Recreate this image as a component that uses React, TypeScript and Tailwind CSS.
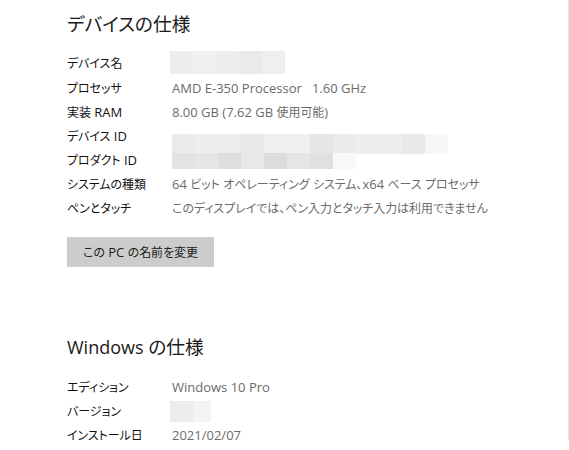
import React from "react";

const font = {
  fontFamily: '"Open Sans", "Noto Sans CJK JP", sans-serif',
};

function T({ s, big }: { s: string; big?: boolean }) {
  const parts = s.split(/([\u3000-\u30ff\u4e00-\u9fff\uff00-\uffef]+)/);
  return (
    <span>
      {parts.map((p, i) =>
        i % 2 === 1 ? (
          <span key={i} className={big ? "text-[1.04em]" : "text-[0.92em]"}>
            {p}
          </span>
        ) : (
          <React.Fragment key={i}>{p}</React.Fragment>
        )
      )}
    </span>
  );
}

function Mosaic({ colors, w, h }: { colors: string[]; w: number; h: number }) {
  return (
    <div className="flex">
      {colors.map((c, i) => (
        <div key={i} style={{ backgroundColor: c, width: w, height: h }} />
      ))}
    </div>
  );
}

function Row({ label, children }: { label: string; children: React.ReactNode }) {
  return (
    <div className="flex h-[24.2px] items-center">
      <div className="w-[105px] shrink-0 text-[13px] text-[#111111] whitespace-nowrap">
        <T s={label} />
      </div>
      <div className="text-[13px] text-[#6b6b6b] whitespace-nowrap">{children}</div>
    </div>
  );
}

export default function App() {
  return (
    <div className="w-[569px] h-[450px] bg-white overflow-hidden [font-feature-settings:'palt']" style={font}>
      <div className="h-[440px] border-r border-[#e3e3e3] pl-[67px] pt-[10px] overflow-hidden">
        <h2 className="text-[18px] leading-[28px] text-[#1a1a1a]">
          <T s="デバイスの仕様" big />
        </h2>

        <div className="mt-[14px]">
          <Row label="デバイス名">
            <div className="-mt-[4px] -ml-[2px]">
              <Mosaic w={23} h={23} colors={["#ededed", "#f0f0f0", "#eeeeee", "#eaeaea", "#efefef"]} />
            </div>
          </Row>
          <Row label="プロセッサ">AMD E-350 Processor&nbsp;&nbsp;&nbsp;1.60 GHz</Row>
          <Row label="実装 RAM">
            <T s="8.00 GB (7.62 GB 使用可能)" />
          </Row>
          <Row label="デバイス ID">
            <div className="mt-[14px]">
              <Mosaic
                w={23}
                h={20}
                colors={["#ebebeb", "#eeeeee", "#ececec", "#e9e9e9", "#efefef", "#f0f0f0", "#e6e6e6", "#ebebeb", "#ededed", "#eeeeee", "#e9e9e9", "#f7f7f7"]}
              />
            </div>
          </Row>
          <Row label="プロダクト ID">
            <Mosaic
              w={23}
              h={16}
              colors={["#e3e3e3", "#e6e6e6", "#dedede", "#e8e8e8", "#dcdcdc", "#e5e5e5", "#e0e0e0", "#f8f8f8"]}
            />
          </Row>
          <Row label="システムの種類">
            <T s="64 ビット オペレーティング システム、x64 ベース プロセッサ" />
          </Row>
          <Row label="ペンとタッチ">
            <T s="このディスプレイでは、ペン入力とタッチ入力は利用できません" />
          </Row>
        </div>

        <button className="mt-[16px] w-[147px] h-[30px] bg-[#cccccc] text-[13px] text-[#1a1a1a] flex items-center justify-center whitespace-pre">
          <T s="この PC の名前を変更" />
        </button>

        <h2 className="mt-[66px] text-[18px] leading-[28px] text-[#1a1a1a]">
          <T s="Windows の仕様" big />
        </h2>

        <div className="mt-[14px]">
          <Row label="エディション">Windows 10 Pro</Row>
          <Row label="バージョン">
            <div className="-ml-[2px] flex">
              <div className="w-[23px] h-[21px] bg-[#ececec]" />
              <div className="w-[18px] h-[21px] bg-[#f3f3f3]" />
            </div>
          </Row>
          <Row label="インストール日">2021/02/07</Row>
        </div>
      </div>
    </div>
  );
}
